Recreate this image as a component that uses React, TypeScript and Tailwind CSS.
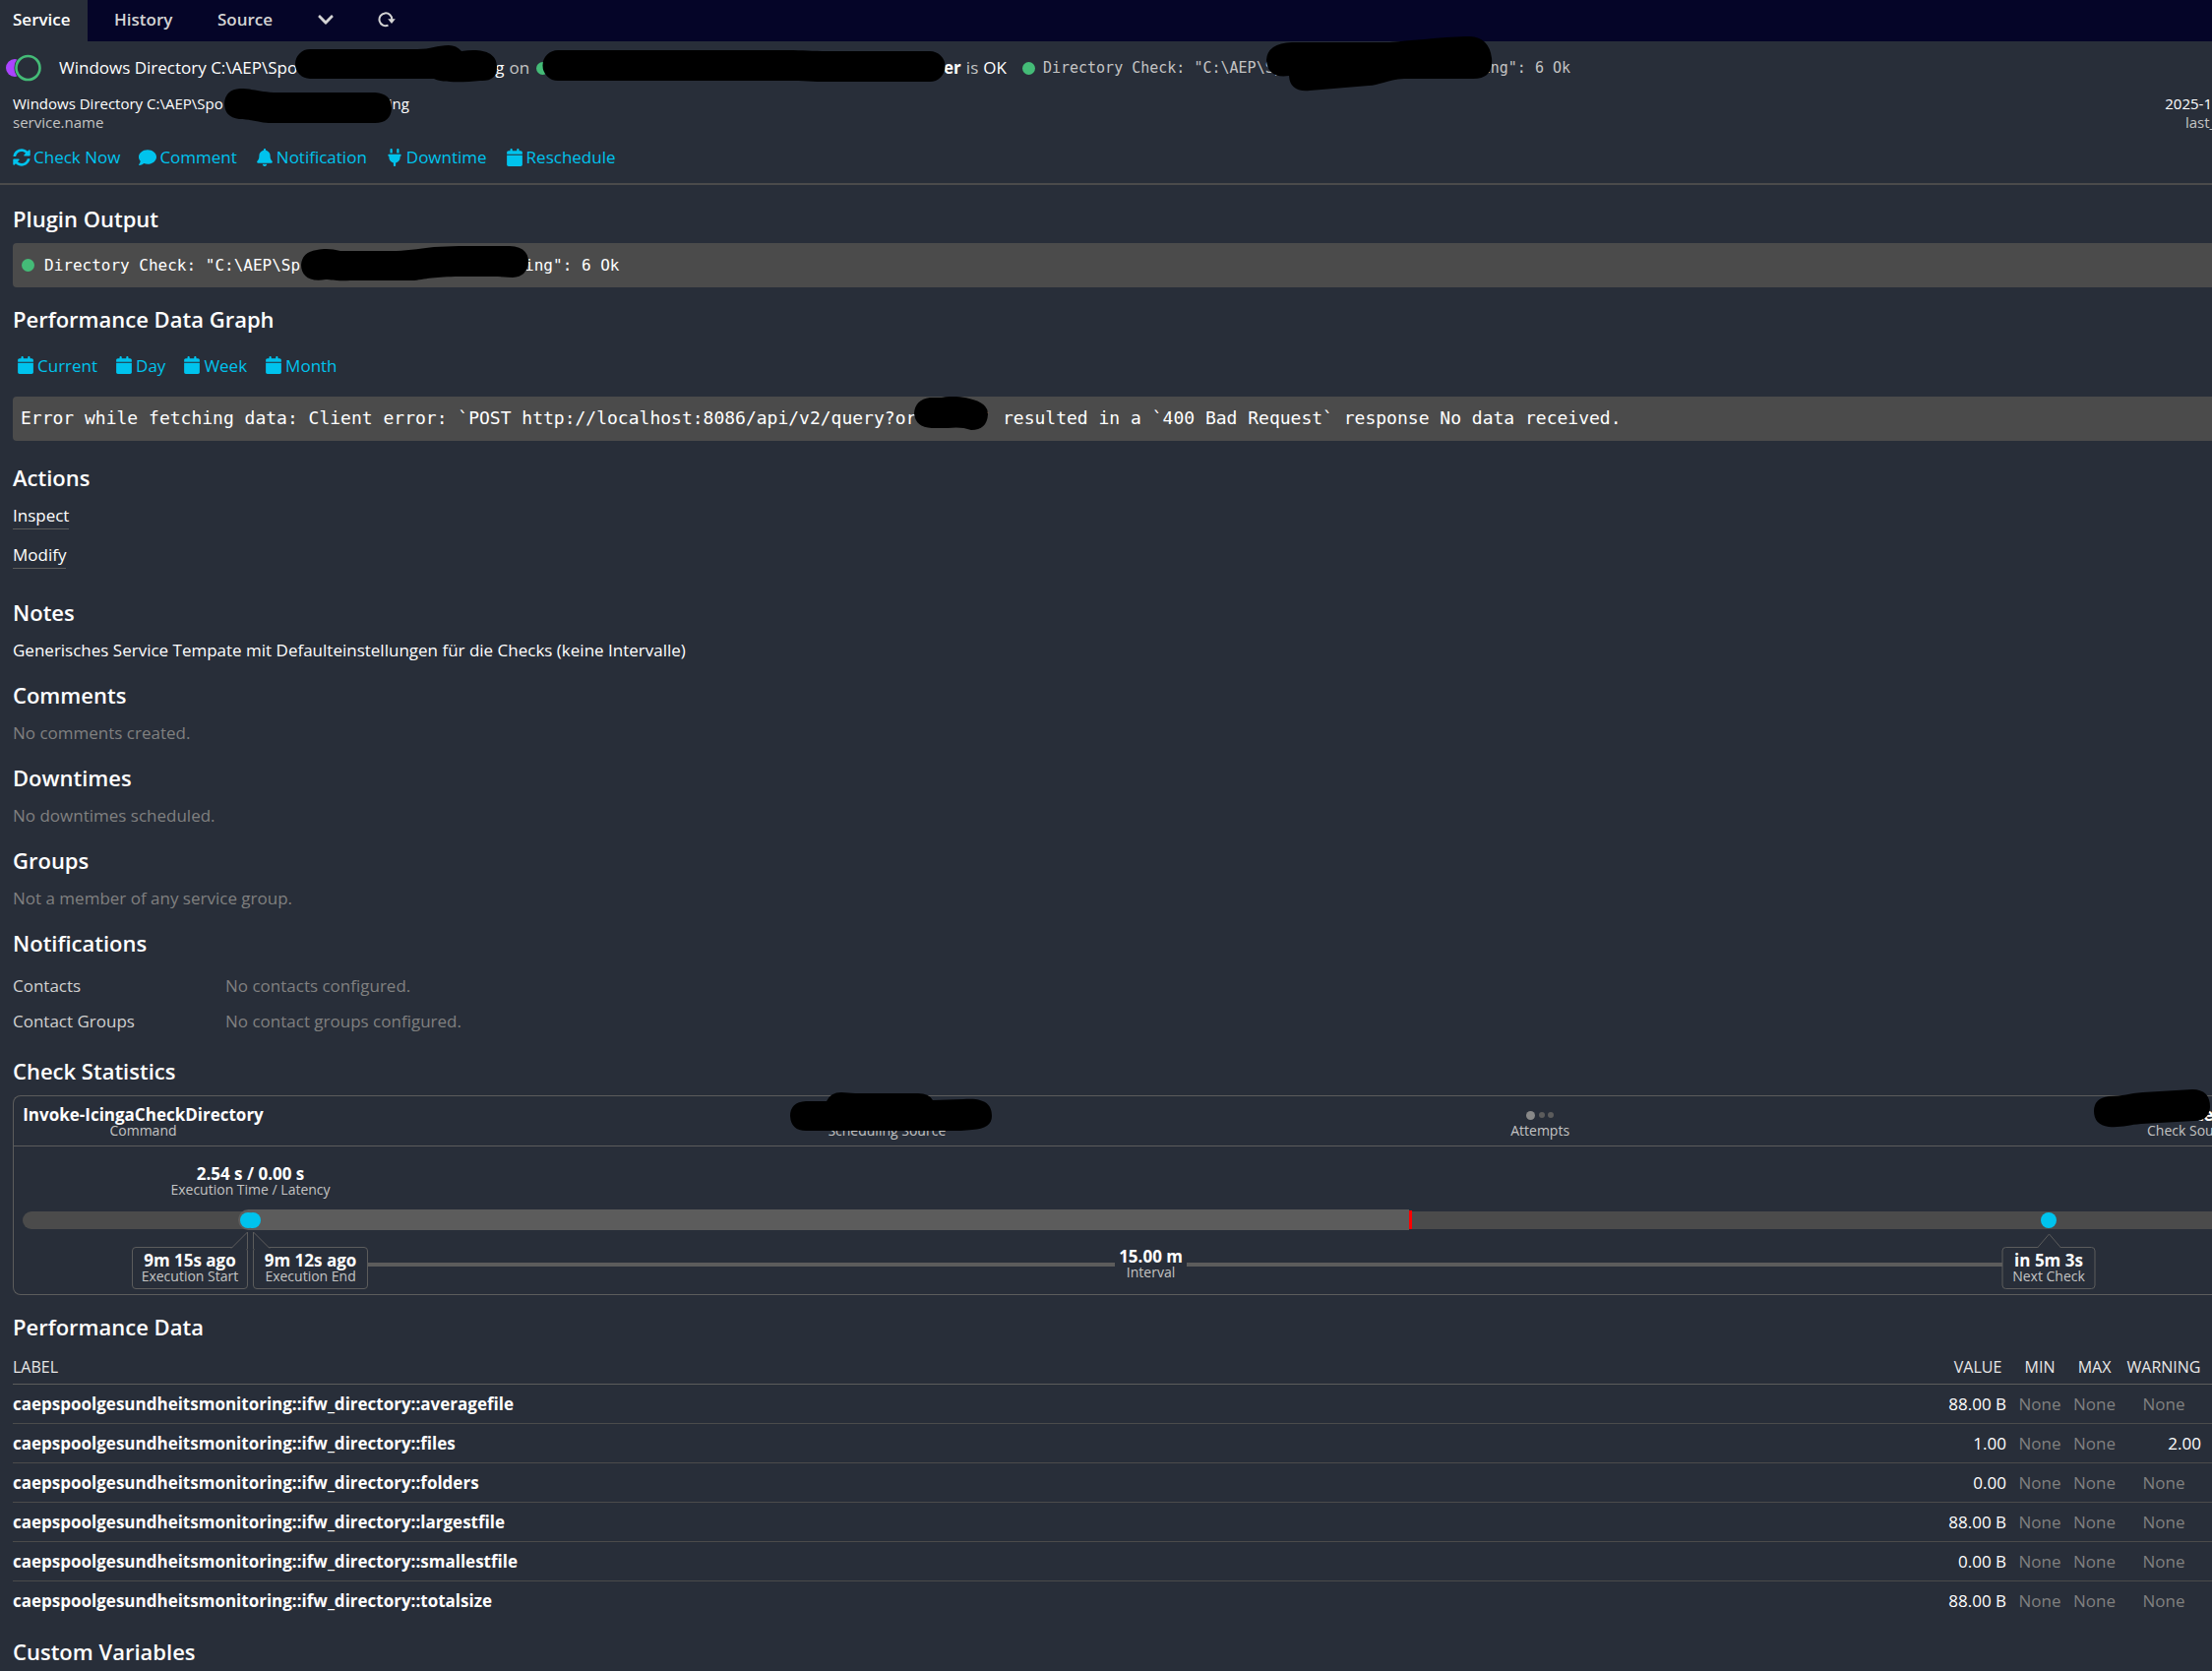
import type { ReactNode } from "react";
import { FaBell, FaCalendar, FaComment, FaPlug } from "react-icons/fa6";
import { FaChevronDown, FaSyncAlt } from "react-icons/fa";
import clsx from "clsx";

interface PerfRow {
  label: string;
  value: string;
  warning?: string;
}

const PERF_PREFIX = "caepspoolgesundheitsmonitoring::ifw_directory::";

const perfRows: PerfRow[] = [
  { label: "averagefile", value: "88.00 B" },
  { label: "files", value: "1.00", warning: "2.00" },
  { label: "folders", value: "0.00" },
  { label: "largestfile", value: "88.00 B" },
  { label: "smallestfile", value: "0.00 B" },
  { label: "totalsize", value: "88.00 B" },
];

const actions = [
  { label: "Check Now", icon: FaSyncAlt },
  { label: "Comment", icon: FaComment },
  { label: "Notification", icon: FaBell },
  { label: "Downtime", icon: FaPlug },
  { label: "Reschedule", icon: FaCalendar },
];

const ranges = ["Current", "Day", "Week", "Month"];

// positions on the check timeline, in percent of its width
const timeline = { start: 10.29, end: 10.52, now: 63.33, next: 92.54 };

interface MarkProps {
  className: string;
  width: number;
  height: number;
  d: string;
}

// black marker stroke over a hidden name
function Mark({ className, width, height, d }: MarkProps) {
  return (
    <svg
      className={clsx("absolute z-10", className)}
      width={width}
      height={height}
      viewBox={`0 0 ${width} ${height}`}
      aria-hidden="true"
    >
      <path d={d} fill="#000" />
    </svg>
  );
}

function Ball({ className }: { className?: string }) {
  return <span className={clsx("size-[13px] shrink-0 rounded-full bg-[#44bb77]", className)} />;
}

function Heading({ children }: { children: ReactNode }) {
  return <h2 className="mt-[19px] mb-[11px] text-[22px] leading-[27px] font-semibold">{children}</h2>;
}

function Empty({ children }: { children: ReactNode }) {
  return <span className="text-[#808080]">{children}</span>;
}

function Stat({ value, label, className }: { value: ReactNode; label: string; className?: string }) {
  return (
    <div className={clsx("flex flex-col items-center whitespace-nowrap", className)}>
      <div className="flex h-4 items-center text-[17px] leading-4 font-bold">{value}</div>
      <div className="text-[14px] leading-4 text-[#c4c4c4]">{label}</div>
    </div>
  );
}

function Header() {
  return (
    <header className="border-b-2 border-[#4b4b4b]">
      <nav className="flex h-[42px] items-stretch bg-[#050528] text-[17px] font-semibold text-[#d4d4d4]">
        <a href="#service" className="flex w-[89px] items-center bg-[#282e39] pb-[3px] pl-[13px] text-white">
          Service
        </a>
        <a href="#history" className="ml-[27px] flex w-[105px] items-center pb-[3px]">History</a>
        <a href="#source" className="flex w-[101px] items-center pb-[3px]">Source</a>
        <button type="button" aria-label="More" className="flex w-[62px] items-center pb-[2px]">
          <FaChevronDown className="size-[18px]" />
        </button>
        <button type="button" aria-label="Reload" className="flex items-center pb-[2px]">
          <svg width="18" height="16" viewBox="0 0 18 16" fill="none" aria-hidden="true">
            <path d="M10.5 13.6A6.4 6.4 0 1 1 14.3 8" stroke="currentColor" strokeWidth="2" />
            <path d="M10.2 7.2h7.6L14 12z" fill="currentColor" />
          </svg>
        </button>
      </nav>

      <div className="flex h-[54px] items-center pl-[6px] text-[17px] whitespace-nowrap">
        <svg width="36" height="28" viewBox="0 0 36 28" className="mr-[18px]" aria-hidden="true">
          <circle cx="9" cy="14" r="9" fill="#aa44ff" />
          <circle cx="22.5" cy="14" r="14" fill="#282e39" />
          <circle cx="22.5" cy="14" r="12" fill="none" stroke="#44bb77" strokeWidth="2.6" />
        </svg>
        <span>Windows Directory C:\AEP\Spo</span>
        <span className="relative h-6 w-[201px]">
          <Mark
            className="-left-[4px] -top-[11px]"
            width={208}
            height={38}
            d="M17 4H126C140 4 146 0 158 0Q166 0 171 6C190 3 207 6 207 22Q207 37 190 36C172 38 150 38 143 34H17A15 15 0 0 1 17 4Z"
          />
        </span>
        <span>g</span>
        <span className="ml-[5px] text-[#c4c4c4]">on</span>
        <Ball className="ml-[7px]" />
        <span className="relative h-6 w-[401px]">
          <Mark
            className="-left-[7px] -top-[6px]"
            width={410}
            height={33}
            d="M16 0H250C264 0 275 1 290 1H394A15 15 0 0 1 394 32H280C266 31 255 31 240 31H16A15 15 0 0 1 16 0Z"
          />
        </span>
        <span className="font-bold">er</span>
        <span className="ml-[5px] text-[#c4c4c4]">is</span>
        <span className="ml-[5px]">OK</span>
        <Ball className="ml-4" />
        <span className="ml-2 font-['DejaVu_Sans_Mono',monospace] text-[15px] text-[#c4c4c4]">Directory Check: "C:\AEP\Sp</span>
        <span className="relative h-6 w-[202px]">
          <Mark
            className="-left-[17px] -top-[20px]"
            width={230}
            height={56}
            d="M26 6H125C150 4 175 1 203 0Q226 -1 229 22Q231 43 210 43H140C122 44 114 50 104 50L44 55Q24 57 23 40Q1 43 0 24Q1 7 26 6Z"
          />
        </span>
        <span className="font-['DejaVu_Sans_Mono',monospace] text-[15px] text-[#c4c4c4]">ing": 6 Ok</span>
      </div>

      <div className="flex justify-between pl-[13px] text-[15px] leading-[19px] whitespace-nowrap">
        <div>
          <div className="flex">
            <span>Windows Directory C:\AEP\Spo</span>
            <span className="relative w-[168px]">
              <Mark
                className="left-px -top-[6px]"
                width={171}
                height={36}
                d="M16 0C28 0 34 3 50 4H153Q170 5 170 20Q169 35 153 35H45C32 34 26 31 15 31Q0 29 0 15Q1 1 16 0Z"
              />
            </span>
            <span>ing</span>
          </div>
          <div className="text-[#c4c4c4]">service.name</div>
        </div>
        <div className="flex flex-col items-end">
          <div>2025-1</div>
          <div className="w-[27px] overflow-hidden text-[#c4c4c4]">last_</div>
        </div>
      </div>

      <div className="flex h-[52px] items-center gap-[19px] pl-[13px] text-[17px] text-[#00c3ed]">
        {actions.map(({ label, icon: Icon }) => (
          <button key={label} type="button" className="flex items-center gap-[3px]">
            <Icon className="size-[18px]" />
            {label}
          </button>
        ))}
      </div>
    </header>
  );
}

function Timeline() {
  return (
    <div className="relative h-[150px] pt-5">
      <div className="relative h-[46px]">
        <div
          className="absolute -translate-x-1/2"
          style={{ left: `${(timeline.start + timeline.end) / 2}%` }}
        >
          <Stat value="2.54 s / 0.00 s" label="Execution Time / Latency" />
        </div>
      </div>

      <div className="relative h-[18px] rounded-l-full bg-[#4b4b4b]">
        <div
          className="absolute -top-[2px] -ml-[10px] h-[21px] rounded-l-full bg-[#5c5c5c]"
          style={{ left: `${timeline.start}%`, right: `${100 - timeline.now}%` }}
        />
        <div
          className="absolute -top-px h-[19px] w-[3px] bg-[#ff0000]"
          style={{ left: `${timeline.now}%` }}
        />
        {[timeline.start, timeline.end, timeline.next].map((pos) => (
          <span
            key={pos}
            className="absolute top-px size-4 -translate-x-1/2 rounded-full bg-[#00c3ed]"
            style={{ left: `${pos}%` }}
          />
        ))}
      </div>

      <div className="relative">
        <div
          className="absolute top-[20px] flex items-center"
          style={{ left: `${timeline.end}%`, right: `${100 - timeline.next}%` }}
        >
          <div className="h-1 flex-1 bg-[#5c5c5c]" />
          <Stat value="15.00 m" label="Interval" className="px-1" />
          <div className="h-1 flex-1 bg-[#5c5c5c]" />
        </div>

        <div className="absolute top-[18px] -translate-x-full" style={{ left: `${timeline.start}%` }}>
          <Stat
            value="9m 15s ago"
            label="Execution Start"
            className="h-[43px] w-[118px] justify-center rounded border border-[#5c5c5c] bg-[#282e39]"
          />
          <svg className="absolute -top-[16px] right-0" width="18" height="18" viewBox="0 0 18 18" aria-hidden="true">
            <path d="M1 17.5L17.5 1V20" fill="#282e39" stroke="#5c5c5c" />
          </svg>
        </div>
        <div className="absolute top-[18px]" style={{ left: `${timeline.end}%` }}>
          <Stat
            value="9m 12s ago"
            label="Execution End"
            className="h-[43px] w-[117px] justify-center rounded border border-[#5c5c5c] bg-[#282e39]"
          />
          <svg className="absolute -top-[16px] left-0" width="18" height="18" viewBox="0 0 18 18" aria-hidden="true">
            <path d="M17 17.5L.5 1V20" fill="#282e39" stroke="#5c5c5c" />
          </svg>
        </div>
        <div className="absolute top-[18px] -translate-x-1/2" style={{ left: `${timeline.next}%` }}>
          <Stat
            value="in 5m 3s"
            label="Next Check"
            className="h-[43px] w-[95px] justify-center rounded border border-[#5c5c5c] bg-[#282e39]"
          />
          <svg className="absolute -top-[14px] left-[35px]" width="26" height="16" viewBox="0 0 26 16" aria-hidden="true">
            <path d="M1 15L13 1l12 14" fill="#282e39" stroke="#5c5c5c" />
          </svg>
        </div>
      </div>
    </div>
  );
}

function CheckStatistics() {
  return (
    <div className="rounded-l-lg border-y border-l border-[#5c5c5c]">
      <div className="flex h-[51px] justify-between border-b border-[#5c5c5c] pt-[11px] pl-[9px]">
        <Stat value="Invoke-IcingaCheckDirectory" label="Command" className="w-[245px]" />
        <Stat
          value={
            <Mark
              className="-top-[15px] left-[3px]"
              width={206}
              height={40}
              d="M16 9H37Q41 0 52 0L66 1H130Q141 1 145 8L176 7C200 5 205 14 205 24Q205 37 185 38C178 39 170 39 160 39H16Q1 39 0 24Q0 10 16 9Z"
            />
          }
          label="Scheduling Source"
          className="relative w-[202px]"
        />
        <Stat
          value={
            <span className="flex items-center gap-1">
              <i className="size-[9px] rounded-full bg-[#888888]" />
              <i className="size-[6px] rounded-full bg-[#5c5c5c]" />
              <i className="-ml-px size-[6px] rounded-full bg-[#5c5c5c]" />
            </span>
          }
          label="Attempts"
          className="w-[61px]"
        />
        <div className="relative w-[120px] overflow-x-clip whitespace-nowrap">
          <div className="h-4 pl-[104px] text-[17px] leading-4 font-bold">te</div>
          <div className="pl-[54px] text-[14px] leading-4 text-[#c4c4c4]">Check Source</div>
          <Mark
            className="-top-[18px] left-0"
            width={119}
            height={39}
            d="M15 7C30 7 35 4 50 3L100 0Q118 0 118 18Q117 32 102 32L48 35C35 36 28 39 15 38Q0 36 0 22Q0 9 15 7Z"
          />
        </div>
      </div>
      <div className="pl-[9px]">
        <Timeline />
      </div>
    </div>
  );
}

function PerformanceTable() {
  return (
    <table className="w-full table-fixed">
      <thead>
        <tr className="h-[33px] border-b border-[#5c5c5c] text-[16px] text-[#e8e8e8]">
          <th className="text-left font-normal">LABEL</th>
          <th className="w-[70px] font-medium">VALUE</th>
          <th className="w-[56px] font-medium">MIN</th>
          <th className="w-[55px] font-medium">MAX</th>
          <th className="w-[92px] pr-[11px] pl-[5px] font-medium">WARNING</th>
        </tr>
      </thead>
      <tbody>
        {perfRows.map((row) => (
          <tr key={row.label} className="h-10 border-b border-[#4b4b4b] whitespace-nowrap last:border-b-0">
            <th className="text-left font-bold">{PERF_PREFIX + row.label}</th>
            <td className="pr-[6px] text-right">{row.value}</td>
            <td className="text-center"><Empty>None</Empty></td>
            <td className="text-center"><Empty>None</Empty></td>
            <td className={clsx("pr-[11px] pl-[5px]", row.warning ? "text-right" : "text-center")}>
              {row.warning ?? <Empty>None</Empty>}
            </td>
          </tr>
        ))}
      </tbody>
    </table>
  );
}

export default function App() {
  return (
    <div className="min-h-screen overflow-x-hidden bg-[#282e39] font-['Open_Sans',sans-serif] text-white">
      <Header />
      <main className="flex flex-col pt-[2px] pl-[13px] text-[17px] leading-[27px]">
        <Heading>Plugin Output</Heading>
        <div className="flex h-[45px] items-center rounded-l bg-[#4b4b4b] pl-[9px] font-['DejaVu_Sans_Mono',monospace] text-[16px] whitespace-nowrap">
          <Ball className="mr-[10px]" />
          <span>Directory Check: "C:\AEP\Sp</span>
          <span className="relative h-6 w-[228px]">
            <Mark
              className="left-px -top-[8px]"
              width={232}
              height={37}
              d="M16 4C25 2 32 3 40 5H92C105 5 118 3 135 1L160 0H212Q231 1 231 16Q230 31 215 32L200 31H165C140 31 128 33 115 35H50C35 36 32 34 25 34C8 37 0 30 0 19Q1 6 16 4Z"
            />
          </span>
          <span>ing": 6 Ok</span>
        </div>

        <Heading>Performance Data Graph</Heading>
        <div className="mb-[10px] flex h-[44px] items-center gap-[18px] pl-1 text-[#00c3ed]">
          {ranges.map((range) => (
            <a key={range} href={`#${range.toLowerCase()}`} className="flex items-center gap-[3px]">
              <FaCalendar className="size-[18px]" />
              {range}
            </a>
          ))}
        </div>
        <div className="mb-[5px] flex h-[45px] rounded-l bg-[#4b4b4b] pt-2 pl-2 font-['DejaVu_Sans_Mono',monospace] text-[18px] whitespace-nowrap">
          <span>Error while fetching data: Client error: `POST http://localhost:8086/api/v2/query?or</span>
          <span className="relative w-[66px]">
            <Mark
              className="-left-[2px] -top-[8px]"
              width={76}
              height={35}
              d="M16 1L28 1C38 -1 48 0 56 2Q75 6 75 18Q74 34 58 34C50 31 42 31 34 32H18Q1 31 0 17Q1 3 16 1Z"
            />
          </span>
          <span>` resulted in a `400 Bad Request` response No data received.</span>
        </div>

        <Heading>Actions</Heading>
        <ul>
          {["Inspect", "Modify"].map((name) => (
            <li key={name} className="flex h-10">
              <a href={`#${name.toLowerCase()}`} className="h-7 border-b border-[#5c5c5c]">{name}</a>
            </li>
          ))}
        </ul>

        <Heading>Notes</Heading>
        <p>Generisches Service Tempate mit Defaulteinstellungen für die Checks (keine Intervalle)</p>

        <Heading>Comments</Heading>
        <p><Empty>No comments created.</Empty></p>

        <Heading>Downtimes</Heading>
        <p><Empty>No downtimes scheduled.</Empty></p>

        <Heading>Groups</Heading>
        <p><Empty>Not a member of any service group.</Empty></p>

        <Heading>Notifications</Heading>
        <dl className="grid grid-cols-[216px_1fr] pt-px leading-9 text-[#d0d0d0]">
          <dt>Contacts</dt>
          <dd><Empty>No contacts configured.</Empty></dd>
          <dt>Contact Groups</dt>
          <dd><Empty>No contact groups configured.</Empty></dd>
        </dl>

        <Heading>Check Statistics</Heading>
        <CheckStatistics />

        <Heading>Performance Data</Heading>
        <PerformanceTable />

        <Heading>Custom Variables</Heading>
      </main>
    </div>
  );
}
